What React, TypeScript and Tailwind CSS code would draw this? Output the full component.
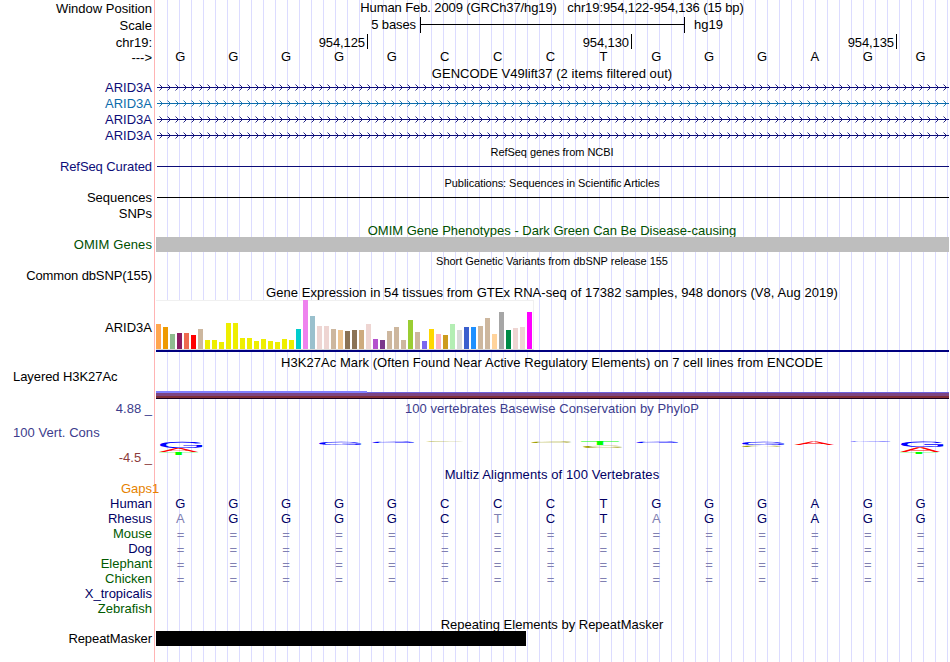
import React from "react";
import clsx from "clsx";

type RowProps = {
  height: string;
  label?: React.ReactNode;
  labelClass?: string;
  children?: React.ReactNode;
};

const BASES = "GGGGGCCCTGGGAGG".split("");
const RHESUS = "AGGGGCTCTAGGAGG".split("");

// GTEx tissues: [height, colour]
const TISSUES: [number, string][] = [
  [25, "#ffa54f"], [22, "#ee9a00"], [15, "#8fbc8f"], [16, "#8b1c62"], [16, "#ee6a50"], [14, "#ff0000"],
  [20, "#cdb79e"], [9, "#eeee00"], [9, "#eeee00"], [7, "#eeee00"], [26, "#eeee00"], [26, "#eeee00"],
  [11, "#eeee00"], [11, "#eeee00"], [8, "#eeee00"], [10, "#eeee00"], [8, "#eeee00"], [7, "#eeee00"],
  [10, "#eeee00"], [9, "#eeee00"], [20, "#00cdcd"], [49, "#ee82ee"], [33, "#9ac0cd"], [23, "#eed5d2"],
  [23, "#eed5d2"], [20, "#cdb79e"], [19, "#eec591"], [18, "#8b7355"], [19, "#8b7355"], [19, "#cdaa7d"],
  [25, "#eed5d2"], [10, "#b452cd"], [9, "#7a378b"], [18, "#cdb79e"], [22, "#cdb79e"], [9, "#cdb79e"],
  [29, "#9acd32"], [17, "#cdb79e"], [8, "#7a67ee"], [20, "#ffd700"], [15, "#ffb6c1"], [14, "#cd9b1d"],
  [25, "#b4eeb4"], [19, "#d9d9d9"], [22, "#3a5fcd"], [22, "#1e90ff"], [23, "#cdb79e"], [31, "#cdb79e"],
  [15, "#ffd39b"], [37, "#a6a6a6"], [19, "#008b45"], [21, "#eed5d2"], [22, "#eed5d2"], [37, "#ff00ff"],
];

// Ink box of each letter in em: left, right, height
const INK: Record<string, [number, number, number]> = {
  G: [0.05, 0.718, 0.7],
  C: [0.05, 0.688, 0.7],
  A: [0.002, 0.665, 0.688],
  T: [0.022, 0.588, 0.688],
};

// Conservation logo: letter, left, right, top, bottom, colour
const LOGO: [string, number, number, number, number, string][] = [
  ["G", 5, 48, 41.3, 47.6, "#0000ff"],
  ["A", 4, 43, 48, 52, "#ff0000"],
  ["T", 4, 43, 52, 55, "#00ff00"],
  ["G", 164, 207, 41.3, 44.5, "#0000ff"],
  ["G", 217, 260, 41.3, 42.8, "#0000ff"],
  ["C", 270, 310, 41.1, 41.8, "#a0a000"],
  ["C", 376, 417, 41.3, 42.8, "#a0a000"],
  ["T", 426, 464, 41, 45, "#00ff00"],
  ["C", 428, 468, 45.3, 47.6, "#a0a000"],
  ["G", 481, 524, 41.3, 42.8, "#0000ff"],
  ["G", 587, 630, 41.3, 44.5, "#0000ff"],
  ["C", 587, 627, 45.2, 46.6, "#a0a000"],
  ["A", 639, 679, 41, 44.6, "#ff0000"],
  ["G", 694, 736, 41.1, 41.8, "#0000ff"],
  ["G", 746, 789, 41.3, 46.8, "#0000ff"],
  ["A", 745, 785, 47.2, 52, "#ff0000"],
  ["T", 745, 783, 52, 54, "#00ff00"],
];

const SPECIES = [
  { name: "Mouse", color: "text-[#005a00]", aligned: true },
  { name: "Dog", color: "text-[#000064]", aligned: true },
  { name: "Elephant", color: "text-[#005a00]", aligned: true },
  { name: "Chicken", color: "text-[#005a00]", aligned: true },
  { name: "X_tropicalis", color: "text-[#000064]", aligned: false },
  { name: "Zebrafish", color: "text-[#005a00]", aligned: false },
];

const Row: React.FC<RowProps> = ({ height, label, labelClass, children }) => (
  <div className={clsx("flex", height)}>
    <div className={clsx("w-[152px] shrink-0 text-right", labelClass)}>{label}</div>
    <div className="ml-[3px] w-[794px] shrink-0">{children}</div>
  </div>
);

const Title: React.FC<{ className?: string; children: React.ReactNode }> = ({ className, children }) => (
  <div className={clsx("text-center", className)}>{children}</div>
);

const Letters: React.FC<{ letters: string[]; base?: string[] }> = ({ letters, base }) => (
  <div className="-ml-px grid w-[793px] grid-cols-15 text-center">
    {letters.map((l, i) => (
      <span key={i} className={clsx(base && base[i] !== l && "text-[#8080b2]")}>
        {l}
      </span>
    ))}
  </div>
);

const Gene: React.FC<{ id: string; color: string }> = ({ id, color }) => (
  <Row height="h-4" label="ARID3A" labelClass={color}>
    <svg width="794" height="16" className={clsx("block", color)}>
      <defs>
        <pattern id={id} x="4" y="0" width="8" height="16" patternUnits="userSpaceOnUse">
          <path d="M0.5 4.5 L3.5 7.5 L0.5 10.5" fill="none" stroke="currentColor" strokeWidth="0.9" />
        </pattern>
      </defs>
      <rect x="2" y="7" width="792" height="1" fill="currentColor" />
      <rect x="2" y="0" width="792" height="16" fill={`url(#${id})`} />
    </svg>
  </Row>
);

const Expression = () => (
  <div className="ml-px">
    <div className="flex h-[50px] w-[378px] items-end gap-[2px] border border-l-0 border-[#f0f0f0] border-b-[#d8d8d8] bg-white">
      {TISSUES.map(([height, color], i) => (
        <div
          key={i}
          className={clsx("w-[5px] shrink-0", height === 49 && "-mt-px")}
          style={{ height, backgroundColor: color }}
        />
      ))}
    </div>
    <div className="h-0.5 bg-[#000080]" />
  </div>
);

const Logo = () => (
  <svg width="794" height="66" className="block" textRendering="geometricPrecision">
    {LOGO.map(([letter, x0, x1, y0, y1, color], i) => {
      const [left, right, top] = INK[letter];
      const sx = (x1 - x0) / ((right - left) * 100);
      const sy = (y1 - y0) / (top * 100);
      return (
        <text key={i} fontSize="100" fill={color} transform={`matrix(${sx} 0 0 ${sy} ${x0 - left * 100 * sx} ${y1})`}>
          {letter}
        </text>
      );
    })}
  </svg>
);

export default function App() {
  return (
    <main className="relative h-[662px] w-[950px] overflow-hidden bg-white font-['Liberation_Sans',Arial,sans-serif] text-[13px] leading-[15px] whitespace-pre text-black">
      {/* Guide lines */}
      <div className="absolute inset-y-0 left-[154px] w-px bg-[#ffb4b4]" />
      <div className="absolute inset-y-0 right-0 left-[167px] bg-[linear-gradient(to_right,#dcdcff_1px,transparent_1px)] bg-size-[12px_12px]" />

      <div className="relative flex flex-col">
        {/* Ruler */}
        <Row height="h-[17px]" label="Window Position" labelClass="leading-[17px]">
          <Title className="tracking-[-0.1px]">{"Human Feb. 2009 (GRCh37/hg19)   chr19:954,122-954,136 (15 bp)"}</Title>
        </Row>
        <Row height="h-[18px]" label="Scale" labelClass="leading-[17px]">
          <div className="flex">
            <span className="w-[261px] text-right tracking-[-0.1px]">5 bases</span>
            <div className="ml-1 flex h-4 w-[265px] items-center border-x border-black">
              <div className="-mt-px h-px w-full bg-black" />
            </div>
            <span className="ml-[9px]">hg19</span>
          </div>
        </Row>
        <Row height="h-[14px]" label="chr19:">
          <div className="-mt-px flex pt-px tracking-[-0.1px]">
            <span className="w-[210px] text-right">954,125</span>
            <div className="-mt-px ml-[2px] h-[15px] w-px bg-black" />
            <span className="w-[261px] text-right">954,130</span>
            <div className="-mt-px ml-[2px] h-[15px] w-px bg-black" />
            <span className="w-[262px] text-right">954,135</span>
            <div className="-mt-px ml-[2px] h-[15px] w-px bg-black" />
          </div>
        </Row>
        <Row height="h-[17px]" label="--->" labelClass="leading-[17px]">
          <Letters letters={BASES} />
        </Row>

        {/* Genes */}
        <Row height="h-[14px]">
          <Title className="tracking-[0.05px]">GENCODE V49lift37 (2 items filtered out)</Title>
        </Row>
        <Gene id="arrows-1" color="text-[#0c0c78]" />
        <Gene id="arrows-2" color="text-[#0c6cac]" />
        <Gene id="arrows-3" color="text-[#0c0c78]" />
        <Gene id="arrows-4" color="text-[#0c0c78]" />
        <Row height="h-[15px]">
          <Title className="text-[11px] leading-[16px] tracking-[-0.05px]">RefSeq genes from NCBI</Title>
        </Row>
        <Row height="h-4" label="RefSeq Curated" labelClass="text-[#0c0c78] tracking-[-0.08px]">
          <div className="ml-0.5 pt-[7px]">
            <div className="h-px bg-[#0c0c78]" />
          </div>
        </Row>
        <Row height="h-[15px]">
          <Title className="text-[11px] leading-[16px] tracking-[-0.06px]">Publications: Sequences in Scientific Articles</Title>
        </Row>
        <Row height="h-4" label="Sequences">
          <div className="ml-0.5 pt-[7px]">
            <div className="h-px bg-black" />
          </div>
        </Row>
        <Row height="h-4" label="SNPs" />

        {/* Variants */}
        <Row height="h-[15px]">
          <Title className="leading-[17px] text-[#005000]">OMIM Gene Phenotypes - Dark Green Can Be Disease-causing</Title>
        </Row>
        <Row height="h-[15px]" label="OMIM Genes" labelClass="text-[#005000] tracking-[0.1px]">
          <div className="relative ml-px h-full bg-[#bebebe]" />
        </Row>
        <Row height="h-4">
          <Title className="text-[11px] leading-[18px] tracking-[-0.03px]">Short Genetic Variants from dbSNP release 155</Title>
        </Row>
        <Row height="h-4" label="Common dbSNP(155)" labelClass="tracking-[-0.12px]" />

        {/* Expression */}
        <Row height="h-4">
          <Title className="leading-[17px] tracking-[0.05px]">
            Gene Expression in 54 tissues from GTEx RNA-seq of 17382 samples, 948 donors (V8, Aug 2019)
          </Title>
        </Row>
        <Row height="h-[52px]" label="ARID3A" labelClass="leading-[55px]">
          <Expression />
        </Row>

        {/* Regulation */}
        <Row height="h-[17px]">
          <Title className="leading-[21px] tracking-[0.05px]">
            H3K27Ac Mark (Often Found Near Active Regulatory Elements) on 7 cell lines from ENCODE
          </Title>
        </Row>
        <Row height="h-[31px]" label="Layered H3K27Ac" labelClass="pl-[13px] !text-left tracking-[-0.07px]">
          <div className="ml-px pt-[22px]">
            <div className="h-px w-[211px] bg-[#8080ff]" />
            <div className="flex h-px bg-[#6e64dc]">
              <div className="w-[211px] bg-[#8080ff]" />
            </div>
            <div className="h-[3px] bg-[#7c4484]" />
            <div className="h-0.5 bg-[#803038]" />
            <div className="h-px bg-[#180020]" />
          </div>
        </Row>

        {/* Conservation */}
        <Row
          height="h-[66px]"
          label={
            <div className="flex h-full flex-col justify-between pt-[0.5px] pb-px text-[#3c3c8c]">
              <span>4.88 _</span>
              <span className="pl-[13px] text-left tracking-[0.05px]">100 Vert. Cons</span>
              <span className="text-[#8c3c3c]">-4.5 _</span>
            </div>
          }
        >
          <Title className="h-0 leading-[17px] tracking-[0.04px] text-[#3c3c8c]">
            100 vertebrates Basewise Conservation by PhyloP
          </Title>
          <Logo />
        </Row>

        {/* Alignments */}
        <Row height="h-[15px]">
          <Title className="leading-[17px] tracking-[0.1px] text-[#000064]">Multiz Alignments of 100 Vertebrates</Title>
        </Row>
        <Row height="h-[15px]" label="Gaps" labelClass="text-[#e68200]">
          <span className="-ml-[3px] text-[#e68200]">1</span>
        </Row>
        <div className="text-[#000064]">
          <Row height="h-[15px]" label="Human">
            <Letters letters={BASES} />
          </Row>
          <Row height="h-[15px]" label="Rhesus">
            <Letters letters={RHESUS} base={BASES} />
          </Row>
          {SPECIES.map(({ name, color, aligned }) => (
            <Row key={name} height="h-[15px]" label={name} labelClass={color}>
              {aligned && (
                <div className="pt-px">
                  <Letters letters={BASES.map(() => "=")} base={BASES} />
                </div>
              )}
            </Row>
          ))}
        </div>

        {/* Repeats */}
        <Row height="h-[15px]">
          <Title className="leading-[17px]">Repeating Elements by RepeatMasker</Title>
        </Row>
        <Row height="h-[15px]" label="RepeatMasker" labelClass="tracking-[-0.08px]">
          <div className="ml-px h-full w-[370px] bg-black" />
        </Row>
      </div>
    </main>
  );
}
